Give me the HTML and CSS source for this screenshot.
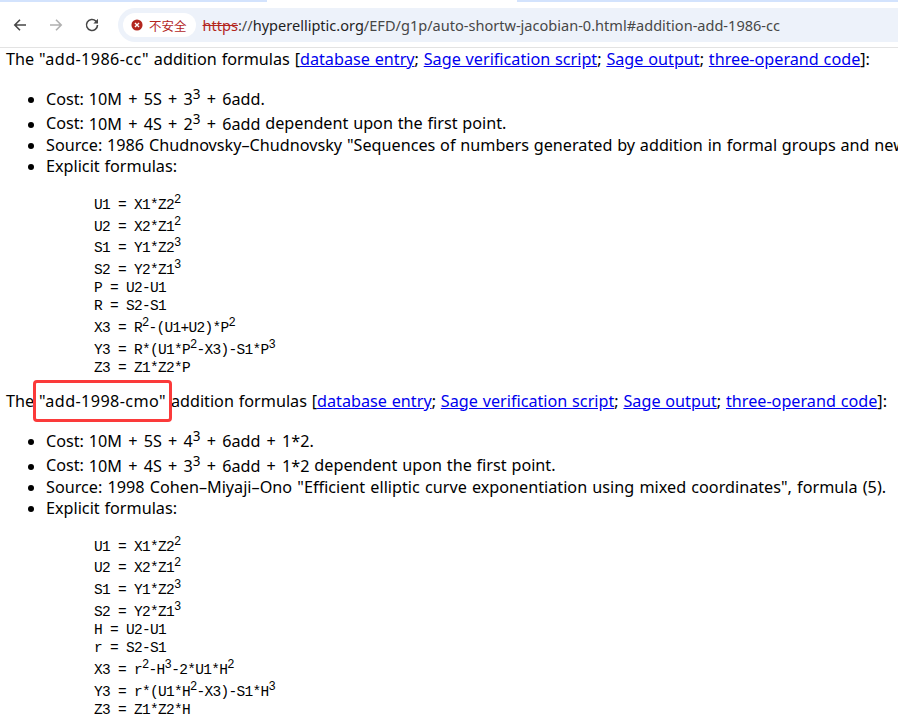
FILE: index.html
```html
<!DOCTYPE html>
<html lang="en">
<head>
<meta charset="utf-8">
<title>add-1986-cc</title>
<link rel="stylesheet" href="styles.css">
</head>
<body>
<div class="tabstrip"><div class="tab-edge"></div></div>
<header class="toolbar">
  <svg class="nav" viewBox="0 0 16 16" width="16" height="16"><path d="M14 8H3M8 2.8 2.8 8 8 13.2" fill="none" stroke="#474747" stroke-width="1.6"/></svg>
  <svg class="nav" viewBox="0 0 16 16" width="16" height="16"><path d="M2 8h11M8 2.8 13.2 8 8 13.2" fill="none" stroke="#b0b0b0" stroke-width="1.6"/></svg>
  <svg class="nav" viewBox="0 0 16 16" width="16" height="16"><path d="M13.5 8a5.5 5.5 0 1 1-1.6-3.9L13.5 5.7" fill="none" stroke="#474747" stroke-width="1.6"/><path d="M14 1.8V6.4H9.4z" fill="#474747"/></svg>
  <div class="omnibox">
    <div class="chip">
      <svg viewBox="0 0 14 14" width="12" height="12"><circle cx="7" cy="7" r="6.5" fill="#b3261e"/><path d="M4.6 4.6l4.8 4.8M9.4 4.6l-4.8 4.8" stroke="#fff" stroke-width="1.5"/></svg>
      <span>不安全</span>
    </div>
    <div class="url"><s class="scheme">https</s><span class="sep">://</span>hyperelliptic.org<span class="path">/EFD/g1p/auto-shortw-jacobian-0.html#addition-add-1986-cc</span></div>
  </div>
</header>
<main class="page">
  <p class="head">The <span class="name">"add-1986-cc"</span> addition formulas [<a href="#">database entry</a>; <a href="#">Sage verification script</a>; <a href="#">Sage output</a>; <a href="#">three-operand code</a>]:</p>
  <ul>
    <li>Cost: <span class="calc">10M + 5S + 3<sup>3</sup> + 6add</span>.</li>
    <li>Cost: <span class="calc">10M + 4S + 2<sup>3</sup> + 6add</span> dependent upon the first point.</li>
    <li>Source: 1986 Chudnovsky–Chudnovsky "Sequences of numbers generated by addition in formal groups and new primality and factorization tests", page 425.</li>
    <li>Explicit formulas:
<pre>U1 = X1*Z2<sup>2</sup>
U2 = X2*Z1<sup>2</sup>
S1 = Y1*Z2<sup>3</sup>
S2 = Y2*Z1<sup>3</sup>
P = U2-U1
R = S2-S1
X3 = R<sup>2</sup>-(U1+U2)*P<sup>2</sup>
Y3 = R*(U1*P<sup>2</sup>-X3)-S1*P<sup>3</sup>
Z3 = Z1*Z2*P</pre>
    </li>
  </ul>
  <p class="head">The <span class="name mark">"add-1998-cmo"</span> addition formulas [<a href="#">database entry</a>; <a href="#">Sage verification script</a>; <a href="#">Sage output</a>; <a href="#">three-operand code</a>]:</p>
  <ul>
    <li>Cost: <span class="calc">10M + 5S + 4<sup>3</sup> + 6add + 1*2</span>.</li>
    <li>Cost: <span class="calc">10M + 4S + 3<sup>3</sup> + 6add + 1*2</span> dependent upon the first point.</li>
    <li class="wide">Source: 1998 Cohen–Miyaji–Ono "Efficient elliptic curve exponentiation using mixed coordinates", formula (5).</li>
    <li>Explicit formulas:
<pre>U1 = X1*Z2<sup>2</sup>
U2 = X2*Z1<sup>2</sup>
S1 = Y1*Z2<sup>3</sup>
S2 = Y2*Z1<sup>3</sup>
H = U2-U1
r = S2-S1
X3 = r<sup>2</sup>-H<sup>3</sup>-2*U1*H<sup>2</sup>
Y3 = r*(U1*H<sup>2</sup>-X3)-S1*H<sup>3</sup>
Z3 = Z1*Z2*H</pre>
    </li>
  </ul>
</main>
</body>
</html>
```
FILE: styles.css
```css
html, body { margin: 0; height: 100%; overflow: hidden; background: #fff; }
body { font-family: "Noto Sans", "Open Sans", sans-serif; color: #000; }
.tabstrip { height: 2px; background: #d3e3fd; }
.tab-edge { width: 250px; height: 2px; margin-left: 267px; background: #fff; }
.toolbar { height: 46px; box-sizing: border-box; padding: 5px 8px 4px 12px; display: flex; align-items: center; border-bottom: 1px solid #e3e3e3; }
.nav { flex: none; margin-right: 20px; }
.toolbar .nav:nth-child(3) { margin-right: 18px; }
.omnibox { flex: 1; height: 34px; margin-right: -8px; border-radius: 17px 0 0 17px; background: #edf2fa; display: flex; align-items: center; padding-left: 5px; font-family: "Noto Sans", sans-serif; font-size: 14.55px; color: #1f1f1f; white-space: nowrap; }
.chip { height: 24px; padding: 0 9px 0 8px; margin-right: 7px; border-radius: 12px; background: #fff; display: flex; align-items: center; gap: 6px; color: #b3261e; font: 12.5px "Noto Sans CJK SC", sans-serif; }
.scheme { color: #b3261e; }
.sep, .path { color: #474747; }
.page { padding: 0 6px; font-size: 16.2px; word-spacing: 0.6px; white-space: nowrap; }
.head { margin: 0; line-height: 22px; }
.name { letter-spacing: 0.4px; }
.calc { word-spacing: 2px; }
.wide { word-spacing: 1px; }
a { color: #0000ee; }
ul { margin: 16px 0 13px; padding-left: 40px; line-height: 21px; }
sup { line-height: 17px; }
pre { margin: 15px 0 0 48px; padding: 0; font-family: "Liberation Mono", monospace; font-size: 14.5px; letter-spacing: -0.7px; word-spacing: 0; line-height: 18px; }
pre sup { line-height: 16.8px; }
.mark { position: relative; }
.mark::after { content: ""; position: absolute; left: -6px; right: -6px; top: -10px; bottom: -10px; border: 3.5px solid #fb3a3a; border-radius: 4px; }
```
